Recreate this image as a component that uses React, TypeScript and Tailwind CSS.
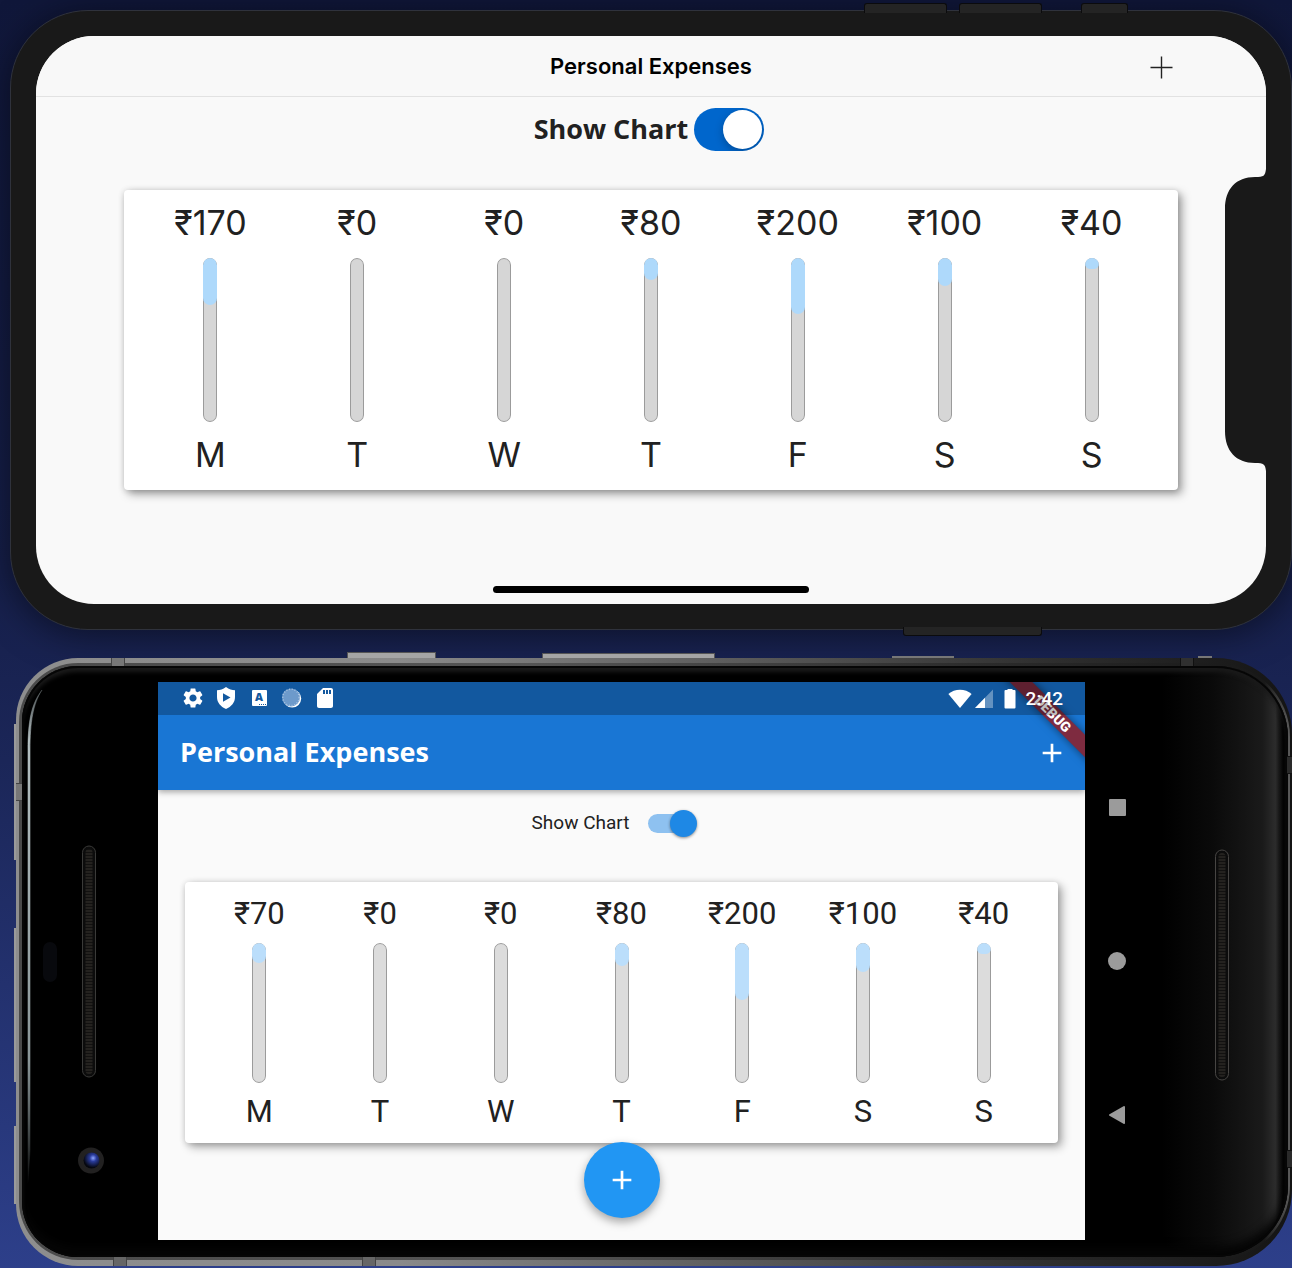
import { useState } from "react";
import { MdAdd, MdSdCard, MdSettings } from "react-icons/md";

type Day = { day: string; amount: number };

const iosDays: Day[] = [
  { day: "M", amount: 170 },
  { day: "T", amount: 0 },
  { day: "W", amount: 0 },
  { day: "T", amount: 80 },
  { day: "F", amount: 200 },
  { day: "S", amount: 100 },
  { day: "S", amount: 40 },
];

const androidDays: Day[] = [{ day: "M", amount: 70 }, ...iosDays.slice(1)];

function ChartBar({ share, track, fill }: { share: number; track: string; fill: string }) {
  return (
    <div className={`relative w-[14px] overflow-hidden rounded-[7px] ${track}`}>
      <div className="absolute inset-0 rounded-[7px] border border-[#9b9b9b]" />
      <div className={`relative rounded-[7px] ${fill}`} style={{ height: `${share * 100}%` }} />
    </div>
  );
}

function sum(days: Day[]) {
  return days.reduce((total, d) => total + d.amount, 0);
}

function IosChart() {
  const total = sum(iosDays);
  return (
    <ul className="mx-[88px] mt-[28px] flex rounded-[4px] bg-white px-[13px] pt-[13px] pb-[15px] font-['Inter',sans-serif] text-[34px] leading-[40px] text-[#212121] shadow-[4px_4px_10px_rgba(0,0,0,0.36),0_1px_6px_rgba(0,0,0,0.16)]">
      {iosDays.map((d, i) => (
        <li key={i} className="flex flex-1 flex-col items-center">
          <span className="mb-[15px]">₹{d.amount}</span>
          <ChartBar share={d.amount / total} track="h-[164px] bg-[#d6d6d6]" fill="bg-[#aed9fb]" />
          <span className="mt-[13px]">{d.day}</span>
        </li>
      ))}
    </ul>
  );
}

function AndroidChart() {
  const total = sum(androidDays);
  return (
    <ul className="mx-[27px] mt-[26px] flex rounded-[4px] bg-white px-[14px] pt-[14px] pb-[13px] font-['Roboto',sans-serif] text-[31px] leading-[36px] text-[#212121] shadow-[4px_4px_10px_rgba(0,0,0,0.32),0_1px_6px_rgba(0,0,0,0.16)]">
      {androidDays.map((d, i) => (
        <li key={i} className="flex flex-1 flex-col items-center gap-[11px]">
          <span>₹{d.amount}</span>
          <ChartBar share={d.amount / total} track="h-[140px] bg-[#dcdcdc]" fill="bg-[#bbdefb]" />
          <span>{d.day}</span>
        </li>
      ))}
    </ul>
  );
}

function Notch() {
  return (
    <svg
      className="absolute top-1/2 right-0 -translate-y-1/2"
      width="42"
      height="306"
      viewBox="0 0 42 306"
      aria-hidden="true"
    >
      <path
        fill="#191919"
        d="M42 0 V2 C41 9 40 10 31 10 C12 10 1 22 1 42 V264 C1 284 12 296 31 296 C40 296 41 297 42 304 V306 Z"
      />
    </svg>
  );
}

function IPhone() {
  const [show, setShow] = useState(true);
  return (
    <section
      aria-label="iPhone"
      className="relative ml-[10px] rounded-[78px] border border-[#2f323c] bg-[#191919] p-[25px] shadow-[0_4px_36px_rgba(0,0,0,0.5)]"
    >
      <i className="absolute -top-[8px] right-[344px] h-[10px] w-[83px] rounded-t-[3px] border border-b-0 border-[#0b0b0d] bg-[#242424]" />
      <i className="absolute -top-[8px] right-[249px] h-[10px] w-[83px] rounded-t-[3px] border border-b-0 border-[#0b0b0d] bg-[#242424]" />
      <i className="absolute -top-[8px] right-[163px] h-[10px] w-[47px] rounded-t-[3px] border border-b-0 border-[#0b0b0d] bg-[#242424]" />
      <i className="absolute right-[249px] -bottom-[7px] h-[9px] w-[139px] rounded-b-[3px] border border-t-0 border-[#0b0b0d] bg-[#242424]" />
      <div className="relative flex flex-col overflow-hidden rounded-[58px] bg-[#f9f9f9] pb-[11px]">
        <header className="grid grid-cols-[1fr_auto_1fr] items-center border-b border-[#e2e2e2] bg-[#f8f8f8] pr-[93px] pl-[93px]">
          <h1 className="col-start-2 font-['Inter',sans-serif] text-[22px] leading-[60px] font-semibold text-black">
            Personal Expenses
          </h1>
          <button type="button" aria-label="Add expense" className="justify-self-end text-[#222]">
            <svg width="23" height="25" viewBox="0 0 23 25" aria-hidden="true">
              <path d="M11.5 2.5V24.500M0.5 13.5H22.5" stroke="currentColor" strokeWidth="1.4" />
            </svg>
          </button>
        </header>
        <div className="flex h-[65px] items-center justify-center gap-[6px] pr-[4px]">
          <label
            htmlFor="ios-show"
            className="font-['Open_Sans',sans-serif] text-[27px] font-bold text-[#212121]"
          >
            Show Chart
          </label>
          <input
            id="ios-show"
            type="checkbox"
            role="switch"
            checked={show}
            onChange={(e) => setShow(e.target.checked)}
            className="relative h-[43px] w-[70px] appearance-none overflow-hidden rounded-full bg-[#d8d8d8] before:absolute before:top-[2px] before:left-[2px] before:size-[39px] before:rounded-full before:bg-white before:shadow-[0_3px_8px_rgba(0,0,0,0.25)] checked:bg-[#0066cc] checked:before:left-[29px]"
          />
        </div>
        {show && <IosChart />}
        <div className="mx-auto mt-[96px] h-[7px] w-[316px] rounded-full bg-black" />
        <Notch />
      </div>
    </section>
  );
}

function StatusIcons() {
  return (
    <div className="flex items-center gap-[9px] pb-[2px]">
      <MdSettings size={24} />
      <svg width="24" height="24" viewBox="0 0 24 24" aria-hidden="true">
        <path
          fillRule="evenodd"
          fill="currentColor"
          d="M12 1 C9 3.2 6 4.2 3 4.3 V11 C3 16.6 6.6 20.6 12 23 C17.400 20.6 21 16.600 21 11 V4.300 C18 4.200 15 3.200 12 1 Z M9 7.200 L16.500 11.500 L9 15.800 Z"
        />
      </svg>
      <span className="flex w-[24px] justify-center">
        <span className="relative flex h-[16px] w-[15px] justify-center rounded-[1px] bg-white font-['Open_Sans',sans-serif] text-[11px] leading-[14px] font-extrabold text-[#14589e]">
          A
          <i className="absolute right-[1px] bottom-[1px] w-[7px] border-b border-dotted border-[#14589e]" />
        </span>
      </span>
      <svg width="24" height="24" viewBox="0 0 24 24" aria-hidden="true">
        <circle cx="12.200" cy="12.600" r="9" fill="white" />
        <circle cx="11" cy="11.400" r="9" fill="#6d9acb" />
        <circle
          cx="11"
          cy="11.400"
          r="8.200"
          fill="none"
          stroke="#a9c4e2"
          strokeWidth="1.500"
          strokeDasharray="1 1.800"
        />
      </svg>
      <MdSdCard size={24} />
    </div>
  );
}

function SystemIcons() {
  return (
    <div className="flex items-center">
      <svg width="24" height="20" viewBox="0 0 24 20" aria-hidden="true">
        <path fill="currentColor" d="M12 19 L0.400 5 C6.500 -0.800 17.500 -0.800 23.600 5 Z" />
      </svg>
      <svg className="ml-[3px]" width="19" height="20" viewBox="0 0 19 20" aria-hidden="true">
        <path fill="currentColor" fillOpacity="0.35" d="M18 0.500 V19 H0 Z" />
        <path fill="currentColor" d="M10 8.700 V19 H0 Z" />
      </svg>
      <svg className="ml-[10px]" width="12" height="20" viewBox="0 0 12 20" aria-hidden="true">
        <path
          fill="currentColor"
          d="M3.500 -0.500 H8.500 V1 H10.500 Q11.500 1 11.500 2 V18.500 Q11.500 19.500 10.500 19.500 H1.500 Q0.500 19.500 0.500 18.500 V2 Q0.500 1 1.500 1 H3.500 Z"
        />
      </svg>
      <time className="ml-[10px] font-['Roboto',sans-serif] text-[19px] leading-[33px] font-medium">
        2:42
      </time>
    </div>
  );
}

function LeftBezel() {
  return (
    <svg className="shrink-0" width="136" height="558" viewBox="22 682 136 558" aria-hidden="true">
      <defs>
        <pattern id="mesh" width="2" height="3" patternUnits="userSpaceOnUse">
          <rect width="2" height="3" fill="#24221f" />
          <rect width="2" height="1" fill="#121110" />
        </pattern>
        <linearGradient id="shine" x1="0" y1="0" x2="0" y2="1">
          <stop offset="0" stopColor="#9aa5a8" stopOpacity="0.4" />
          <stop offset="0.1" stopColor="#b4c0c2" />
          <stop offset="0.75" stopColor="#8a9698" />
          <stop offset="1" stopColor="#8a9698" stopOpacity="0" />
        </linearGradient>
        <radialGradient id="lens" cx="0.6" cy="0.35" r="0.6">
          <stop offset="0" stopColor="#8fa6ff" />
          <stop offset="0.35" stopColor="#2a3c9c" />
          <stop offset="1" stopColor="#05070f" />
        </radialGradient>
      </defs>
      <path
        d="M42 690 C31 704 28 722 28 750 V1184 L30 1150 V750 C30 722 33 704 42 690 Z"
        fill="url(#shine)"
        stroke="url(#shine)"
        strokeWidth="0.600"
      />
      <rect x="82.500" y="846" width="13" height="231" rx="6.500" fill="#0c0c0c" stroke="#3a3a38" />
      <rect x="85.500" y="849" width="7" height="225" rx="3.500" fill="url(#mesh)" />
      <rect x="43" y="942" width="14" height="40" rx="7" fill="#08090d" />
      <circle cx="91" cy="1160.500" r="13" fill="#222121" />
      <circle cx="91.500" cy="1160.500" r="8" fill="url(#lens)" />
    </svg>
  );
}

function RightSpeaker() {
  return (
    <svg className="mt-[167px] ml-[64px] self-start" width="16" height="232" viewBox="0 0 16 232" aria-hidden="true">
      <rect x="2.500" y="1" width="13" height="230" rx="6.500" fill="#0c0c0c" stroke="#474543" />
      <rect x="5.500" y="4" width="7" height="224" rx="3.500" fill="url(#mesh)" />
    </svg>
  );
}

function SystemNav() {
  return (
    <nav
      aria-label="System"
      className="flex w-[64px] shrink-0 flex-col items-center justify-center gap-32 text-[#9b9b9b]"
    >
      <button type="button" aria-label="Recent apps" className="flex size-[26px] items-center justify-center">
        <span className="size-[17px] rounded-[1px] bg-[#9b9b9b]" />
      </button>
      <button type="button" aria-label="Home" className="flex size-[26px] items-center justify-center">
        <span className="size-[18px] rounded-full bg-[#9b9b9b]" />
      </button>
      <button type="button" aria-label="Back" className="flex size-[26px] items-center justify-center">
        <svg width="18" height="20" viewBox="0 0 18 20" aria-hidden="true">
          <path
            d="M16 2 L2 10 L16 18 Z"
            fill="currentColor"
            stroke="currentColor"
            strokeWidth="2"
            strokeLinejoin="round"
          />
        </svg>
      </button>
    </nav>
  );
}

function AndroidApp() {
  const [show, setShow] = useState(true);
  return (
    <div className="relative min-w-0 flex-1 overflow-hidden bg-[#fafafa] pb-[97px]">
      <header className="relative bg-[#1976d4] text-white shadow-[0_2px_6px_rgba(0,0,0,0.35)]">
        <div className="absolute inset-0 overflow-hidden">
          <div className="absolute top-0 right-0 flex size-16 items-center justify-center">
            <span className="w-40 shrink-0 rotate-45 bg-[#7e2b40] text-center font-['Roboto',sans-serif] text-[14px] leading-[16px] font-black shadow-[0_0_8px_rgba(0,0,0,0.5)]">
              DEBUG
            </span>
          </div>
        </div>
        <div className="relative flex h-[33px] items-center justify-between bg-black/25 pr-[22px] pl-[23px]">
          <StatusIcons />
          <SystemIcons />
        </div>
        <div className="relative flex h-[75px] items-center justify-between pr-[17px] pl-[22px]">
          <h1 className="font-['Open_Sans',sans-serif] text-[27px] font-bold">Personal Expenses</h1>
          <button type="button" aria-label="Add expense">
            <MdAdd size={32} />
          </button>
        </div>
      </header>
      <div className="flex h-[66px] items-center justify-center gap-[19px] pr-[14px]">
        <label htmlFor="android-show" className="font-['Roboto',sans-serif] text-[19px] text-[#212121]">
          Show Chart
        </label>
        <input
          id="android-show"
          type="checkbox"
          role="switch"
          checked={show}
          onChange={(e) => setShow(e.target.checked)}
          className="relative h-[27px] w-[49px] appearance-none before:absolute before:top-[4px] before:left-0 before:h-[19px] before:w-[45px] before:rounded-full before:bg-[#9e9e9e] after:absolute after:top-0 after:left-0 after:size-[27px] after:rounded-full after:bg-white after:shadow-[0_1px_3px_rgba(0,0,0,0.45)] checked:before:bg-[#8ec1f0] checked:after:left-[22px] checked:after:bg-[#1e88e5]"
        />
      </div>
      {show && <AndroidChart />}
      <button
        type="button"
        aria-label="Add expense"
        className="absolute bottom-[22px] left-1/2 flex size-[76px] -translate-x-1/2 items-center justify-center rounded-full bg-[#2196f3] text-white shadow-[0_4px_10px_rgba(0,0,0,0.35)]"
      >
        <MdAdd size={32} />
      </button>
    </div>
  );
}

function AndroidPhone() {
  return (
    <section
      aria-label="Android phone"
      className="relative mt-[28px] ml-[16px] rounded-l-[62px] rounded-r-[76px] bg-[linear-gradient(to_right,#8e8e8e,#8a8a8a_30%,#5e5e5e_55%,#303030_80%,#141414)] pt-[5px] pr-[2px] pb-[6px] pl-[3px]"
    >
      <i className="absolute -top-[6px] left-[331px] h-[6px] w-[89px] border border-b-0 border-[#555] bg-[#a5a5a5]" />
      <i className="absolute -top-[5px] left-[526px] h-[5px] w-[173px] border border-b-0 border-[#555] bg-[#a5a5a5]" />
      <i className="absolute -top-[2px] right-[338px] h-[2px] w-[62px] bg-[#777]" />
      <i className="absolute -top-[2px] right-[80px] h-[2px] w-[14px] bg-[#777]" />
      <i className="absolute top-[66px] -left-[2px] h-[136px] w-[2px] bg-[#9a9a9a]" />
      <i className="absolute top-[270px] -left-[2px] h-[154px] w-[2px] bg-[#9a9a9a]" />
      <i className="absolute top-[468px] -left-[2px] h-[78px] w-[2px] bg-[#9a9a9a]" />
      <div className="rounded-l-[59px] rounded-r-[74px] bg-[linear-gradient(to_right,#4a4a4a,#555_40%,#2c2c2c_75%,#191919_98%,#5a5a5a)] pt-[3px] pr-[2px] pb-[3px] pl-[3px]">
        <div className="rounded-l-[56px] rounded-r-[72px] bg-[linear-gradient(to_right,#000_90%,#0a0a0a_94%,#1a1a1a_98%,#2c2c2c_99%,#050505_99.6%)] shadow-[inset_0_0_0_2px_#060606,inset_0_6px_4px_#1a1a1a,inset_0_-10px_8px_#050505]">
          <div className="flex pt-[16px] pb-[17px]">
            <LeftBezel />
            <AndroidApp />
            <div className="flex w-[203px] shrink-0">
              <SystemNav />
              <RightSpeaker />
            </div>
          </div>
        </div>
      </div>
      <i className="absolute top-0 left-[95px] h-[8px] w-[14px] border-x border-[#444] bg-[#777]" />
      <i className="absolute bottom-0 left-[97px] h-[9px] w-[14px] border-x border-[#444] bg-[#666]" />
      <i className="absolute bottom-0 left-[346px] h-[9px] w-[14px] border-x border-[#444] bg-[#666]" />
      <i className="absolute top-0 right-[98px] h-[8px] w-[14px] border-x border-[#111] bg-[#303030]" />
      <i className="absolute top-[125px] left-0 h-[18px] w-[6px] border-y border-[#444] bg-[#777]" />
      <i className="absolute top-[98px] right-0 h-[18px] w-[5px] border-y border-[#111] bg-[#2a2a2a]" />
      <i className="absolute right-0 bottom-[98px] h-[18px] w-[5px] border-y border-[#111] bg-[#2a2a2a]" />
    </section>
  );
}

export default function App() {
  return (
    <main className="overflow-hidden bg-[linear-gradient(to_bottom,#10173a,#161f4a_45%,#1b2658_60%,#2d3f8a)] pt-[10px] pb-[2px]">
      <IPhone />
      <AndroidPhone />
    </main>
  );
}
